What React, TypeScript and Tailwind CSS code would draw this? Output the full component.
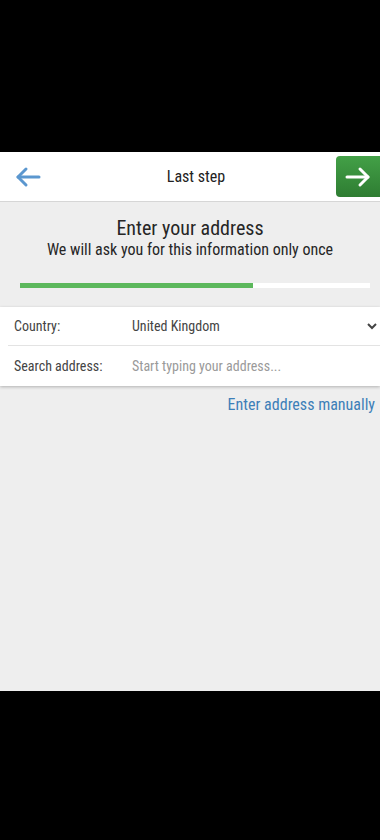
export default function App() {
  const font = { fontFamily: '"Roboto Condensed", Roboto, "Liberation Sans", sans-serif' };
  return (
    <div className="flex h-[840px] w-[380px] flex-col bg-black" style={font}>
      <div className="h-[152px] shrink-0" />
      <div className="flex flex-1 flex-col bg-[#eeeeee]">
        <header className="flex h-[50px] shrink-0 items-center border-b border-[#d6d6d6] bg-white">
          <button className="flex h-full w-[56px] items-center justify-center">
            <svg width="26" height="22" viewBox="0 0 26 22" fill="none" stroke="#5b97cf" strokeWidth="3" strokeLinecap="round" strokeLinejoin="round">
              <path d="M24 11H3" />
              <path d="M11 3L3 11l8 8" />
            </svg>
          </button>
          <h1 className="flex-1 text-center text-[16px] text-[#222]">Last step</h1>
          <button className="flex h-[41px] w-[44px] items-center justify-center self-center rounded-l-[4px] bg-gradient-to-b from-[#43a047] to-[#2e7d32]">
            <svg width="26" height="22" viewBox="0 0 26 22" fill="none" stroke="#ffffff" strokeWidth="3" strokeLinecap="round" strokeLinejoin="round">
              <path d="M2 11h21" />
              <path d="M15 3l8 8-8 8" />
            </svg>
          </button>
        </header>

        <section className="flex flex-col items-center pt-[14px] text-[#262626]">
          <h2 className="text-[20px] leading-[24px]">Enter your address</h2>
          <p className="text-[16px] leading-[20px]">We will ask you for this information only once</p>
        </section>

        <div className="ml-[20px] mr-[10px] mt-[23px] h-[5px] bg-white">
          <div className="h-full bg-[#5cb85c]" style={{ width: '66.6%' }} />
        </div>

        <div className="mt-[19px] bg-white shadow-[0_1px_3px_rgba(0,0,0,0.25)]">
          <div className="ml-[8px] flex h-[39px] items-center border-b border-[#e3e3e3] text-[14px]">
            <span className="w-[124px] pl-[6px] text-[#444]">Country:</span>
            <span className="flex-1 text-[#444]">United Kingdom</span>
            <svg className="mr-[3px]" width="10" height="8" viewBox="0 0 10 8" fill="none" stroke="#444" strokeWidth="2">
              <path d="M1 2l4 4 4-4" />
            </svg>
          </div>
          <div className="ml-[8px] flex h-[40px] items-center text-[14px]">
            <span className="w-[124px] pl-[6px] text-[#444]">Search address:</span>
            <span className="flex-1 text-[#9a9a9a]">Start typing your address...</span>
          </div>
        </div>

        <div className="flex justify-end pr-[5px] pt-[7px]">
          <a className="text-[16px] text-[#3d7fb8]">Enter address manually</a>
        </div>
      </div>
      <div className="h-[149px] shrink-0" />
    </div>
  );
}
